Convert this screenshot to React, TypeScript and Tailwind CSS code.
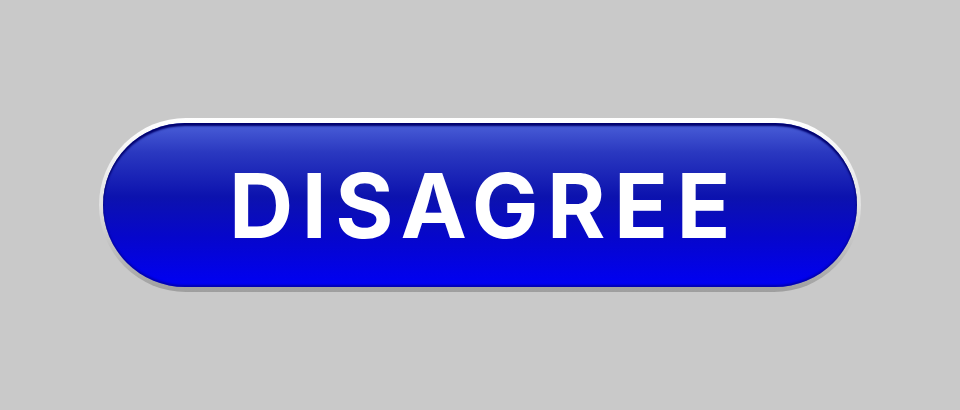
export default function App() {
  return (
    <div className="flex h-[410px] w-[960px] items-center justify-center bg-[#c9c9c9]">
      {/* silver rim around the pill */}
      <div className="h-[174px] w-[762px] rounded-full bg-gradient-to-b from-[#ffffff] via-[#e2e2e2] to-[#9e9e9e] pt-[5px] pb-[5px] pl-[4px] pr-[4px]">
        <button
          type="button"
          className="flex h-full w-full items-center justify-center rounded-full bg-[linear-gradient(to_bottom,#4a5fd8_0%,#2a38c0_18%,#0c12ae_45%,#0606cc_70%,#0000f4_100%)] shadow-[inset_0_3px_2px_#00006e,inset_0_-2px_2px_rgba(0,0,80,0.4)]"
        >
          <span className="pl-[8px] font-['Inter','Liberation_Sans',sans-serif] text-[89px] font-bold leading-none tracking-[0.095em] text-white">
            DISAGREE
          </span>
        </button>
      </div>
    </div>
  );
}
